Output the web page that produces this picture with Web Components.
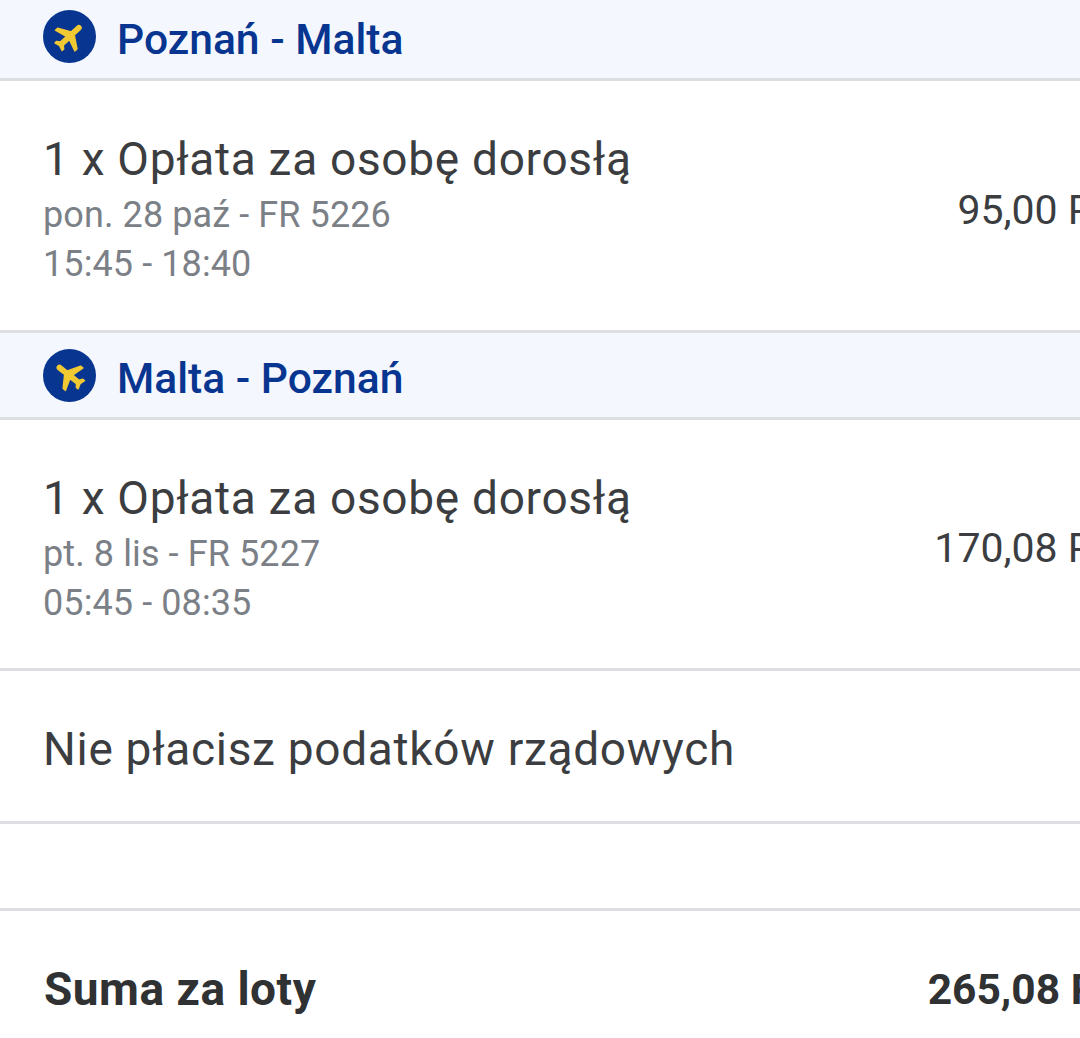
<!DOCTYPE html>
<html lang="pl">
<head>
<meta charset="utf-8">
<title>Suma za loty</title>
<style>
  html, body { margin: 0; padding: 0; background: #fff; overflow: hidden; }
  body { font-family: Roboto, "Liberation Sans", sans-serif; width: 1080px; height: 1038px; }
</style>
</head>
<body>
<flight-summary>
  <leg-header route="Poznań - Malta" angle="47" style="margin-top: -6px"></leg-header>
  <price-row price="95,00 PLN" style="--row-height: 252px; --pad-top: 9px; --label-offset: 1px; --sub-gap: 4px">
    1 x Opłata za osobę dorosłą
    <span slot="sub">pon. 28 paź - FR 5226</span>
    <span slot="sub">15:45 - 18:40</span>
  </price-row>
  <leg-header route="Malta - Poznań" angle="-52"></leg-header>
  <price-row price="170,08 PLN" style="--row-height: 251px; --pad-top: 9px; --label-offset: 1px; --sub-gap: 4px">
    1 x Opłata za osobę dorosłą
    <span slot="sub">pt. 8 lis - FR 5227</span>
    <span slot="sub">05:45 - 08:35</span>
  </price-row>
  <price-row style="--row-height: 153px; --pad-top: 6px">Nie płacisz podatków rządowych</price-row>
  <price-row style="--row-height: 87px"></price-row>
  <price-row total last price="265,08 PLN" style="--row-height: 127px; --pad-top: 29px">Suma za loty</price-row>
</flight-summary>

<script>
/**
 * Column holding the legs and the total.
 */
class FlightSummary extends HTMLElement {
  constructor() {
    super();
    this.attachShadow({ mode: 'open' });
    this.shadowRoot.innerHTML = `
      <style>
        :host {
          display: flex;
          flex-direction: column;
          width: 1080px;
          overflow: hidden;
        }
      </style>
      <slot></slot>
    `;
  }
}

/**
 * Blue route band with the plane badge.
 */
class LegHeader extends HTMLElement {
  constructor() {
    super();
    this.attachShadow({ mode: 'open' });
    const route = this.getAttribute('route');
    const angle = this.getAttribute('angle');
    this.shadowRoot.innerHTML = `
      <style>
        :host {
          display: flex;
          align-items: center;
          gap: 21px;
          box-sizing: border-box;
          height: 87px;
          padding-left: 43px;
          background: #f4f7fd;
          border-bottom: 3px solid #dcdee1;
          color: #073590;
          font: 500 42.6px Roboto, "Liberation Sans", sans-serif;
        }
        svg { width: 53px; height: 53px; flex: none; }
        span { padding-top: 5px; }
      </style>
      <svg viewBox="0 0 53 53" aria-hidden="true">
        <circle cx="26.5" cy="26.5" r="26.5" fill="#073590"/>
        <g transform="translate(26.5 26.5) rotate(${angle}) scale(1.5) translate(-11.5 -12)">
          <path fill="#f1c933" stroke="#f1c933" stroke-width="0.9" stroke-linejoin="round" d="M21 16v-2l-8-5V3.5c0-.83-.67-1.5-1.5-1.5S10 2.67 10 3.5V9l-8 5v2l8-2.5V19l-2 1.5V22l3.5-1 3.5 1v-1.5L13 19v-5.5l8 2.5z"/>
        </g>
      </svg>
      <span>${route}</span>
    `;
  }
}

/**
 * Row with a label, optional small lines and a price running off the edge.
 */
class PriceRow extends HTMLElement {
  constructor() {
    super();
    this.attachShadow({ mode: 'open' });
    const price = this.getAttribute('price') || '';
    this.shadowRoot.innerHTML = `
      <style>
        :host {
          display: flex;
          align-items: center;
          justify-content: space-between;
          box-sizing: border-box;
          height: var(--row-height);
          padding: var(--pad-top, 0) 0 0 43px;
          border-bottom: 3px solid #dcdee1;
          color: #3b3d40;
          font: 400 46px/55px Roboto, "Liberation Sans", sans-serif;
          letter-spacing: 0.7px;
        }
        :host([last]) { border-bottom: none; }
        :host([total]) { font-weight: 700; font-size: 46px; letter-spacing: 0.5px; color: #2f3133; }
        :host([total]) .label { padding-left: 1px; }
        .label { padding-top: var(--label-offset, 0); }
        .sub { margin-top: var(--sub-gap, 0); color: #7b8087; font-size: 36px; line-height: 49px; letter-spacing: 0.1px; }
        ::slotted([slot="sub"]) { display: block; }
        .price { font-size: 41px; letter-spacing: 0; white-space: nowrap; margin-right: -65px; }
        :host([total]) .price { font-size: 42.5px; margin-right: -71px; }
      </style>
      <div class="label">
        <slot></slot>
        <div class="sub"><slot name="sub"></slot></div>
      </div>
      <div class="price">${price}</div>
    `;
  }
}

customElements.define('flight-summary', FlightSummary);
customElements.define('leg-header', LegHeader);
customElements.define('price-row', PriceRow);
</script>
</body>
</html>
